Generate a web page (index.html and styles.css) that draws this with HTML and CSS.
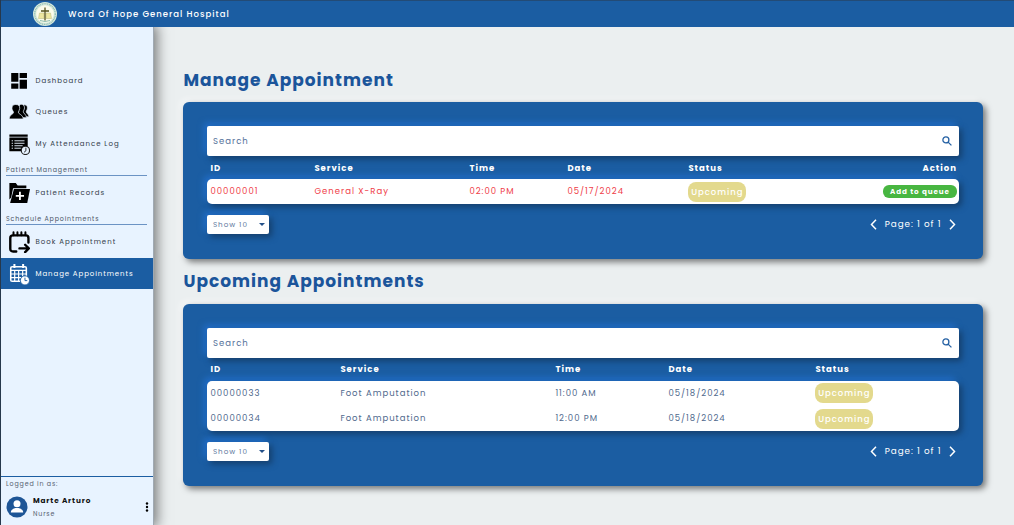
FILE: index.html
```html
<!DOCTYPE html>
<html lang="en">
<head>
<meta charset="utf-8">
<title>Word Of Hope General Hospital</title>
<link rel="stylesheet" href="styles.css">
</head>
<body>
<div class="app">
  <header class="topbar">
    <svg class="logo" viewBox="0 0 24 24"><circle cx="12" cy="12" r="12" fill="#d6e8dc"/><circle cx="12" cy="12" r="10.300" fill="none" stroke="#8ebcb0" stroke-width="1.300" stroke-dasharray="1 .8"/><circle cx="12" cy="12" r="8.800" fill="#fbfbea"/><path d="M6.500 11h4.500v5.500H5.500zM13 11h4.500l1 5.500H13z" fill="#eee6a0" stroke="#b9b77c" stroke-width=".5"/><path d="M12 5.500v13M8 9h8" stroke="#56501d" stroke-width="1.300"/><path d="M7 18.500q5 2 10 0" fill="none" stroke="#8ebcb0"/></svg>
    <span class="brand">Word Of Hope General Hospital</span>
  </header>
  <div class="body">
    <aside class="sidebar">
      <nav class="nav">
        <a class="item"><svg class="icon" viewBox="0 0 24 24"><path d="M3.500 3.300h7.800v9.500H3.500zM12.700 3.300h8v5.500h-8zM3.500 14.700h7.800v5.800H3.500zM12.700 10.500h8v10h-8z"/></svg><span>Dashboard</span></a>
        <a class="item"><svg class="icon" viewBox="0 0 24 24"><g stroke="#e8f3ff" stroke-width=".8"><path d="M17 4.500c1.800-1 4.200.2 4.200 3 0 2-1.300 3-1.300 4.300 0 1.700 2.500 2.200 3.200 5.400H15V7z"/><path d="M13 4.200c2-1.400 5 0 5 3.300 0 2-1.300 3-1.300 4.300 0 1.700 3 2.500 3.600 6.400H11V7z"/><path d="M8.500 3.800c3.200 0 4.300 1.700 4.300 4.200 0 2-1.400 2.900-1.400 4.400 0 2.200 4.600 2 5.300 7.200H1.300c.6-5.200 4.700-5 4.700-7.200 0-1.300-1.700-2.200-1.700-4.400 0-2.500.9-4.200 4.200-4.200z"/></g></svg><span>Queues</span></a>
        <a class="item"><svg class="icon" viewBox="0 0 24 24"><path d="M1.500 1.500h20v2.600h-20zM1.500 5h20v15h-20z"/><path d="M4 8.500h1.500M7 8.500h11M4 11.200h1.500M7 11.200h11M4 13.900h1.500M7 13.900h9M4 16.600h1.500M7 16.600h7" stroke="#e8f3ff" stroke-width="1"/><circle cx="19" cy="19" r="4.500" fill="#e8f3ff" stroke="#222" stroke-width="1.200"/><path d="M19.500 16v3.500L17.500 21" fill="none" stroke="#222"/></svg><span>My Attendance Log</span></a>
        <div class="group">Patient Management</div>
        <a class="item"><svg class="icon" viewBox="0 0 24 24"><path d="M1.500 19V1.200h7l2 2.500h9.500v3H5.500L3.500 17z"/><path d="M6.500 7.700H24l-3 15.300H2.300z"/><path d="M13 10.700v9M8.500 15.200h9" stroke="#fff" stroke-width="2"/></svg><span>Patient Records</span></a>
        <div class="group">Schedule Appointments</div>
        <a class="item"><svg class="icon" viewBox="0 0 24 24"><g fill="none" stroke="#000" stroke-width="2.600" stroke-linecap="round" stroke-linejoin="round"><path d="M9 22.300H5.500Q2.500 22.300 2.500 19.300V7.500Q2.500 4.800 5.500 4.800h14Q22.300 4.800 22.300 7.500V12.500"/><path d="M6 1.500v3M10.300 1.500v3M14.600 1.500v3M19 1.500v3" stroke-width="2.200"/><path d="M12.500 19H22.500M18.700 15l4 4-4 4"/></g></svg><span>Book Appointment</span></a>
        <a class="item active"><svg class="icon" viewBox="0 0 24 24"><rect x="3" y="4" width="17" height="16" rx="1.500" fill="none" stroke="#fff" stroke-width="1.700"/><path d="M3 8h17M7.300 8v12M11.600 8v12M16 8v12M3 12h17M3 16h17" stroke="#fff" stroke-width="1.300"/><path d="M7 1v4.500M16.500 1v4.500" stroke="#fff" stroke-width="2.200"/><circle cx="18.500" cy="19" r="5" fill="#fff" stroke="#1b5da2"/><path d="M18.500 16v3.200H21" fill="none" stroke="#1b5da2"/></svg><span>Manage Appointments</span></a>
      </nav>
      <div class="account">
        <div class="logged">Logged in as:</div>
        <div class="user">
          <svg class="avatar" viewBox="0 0 22 22"><circle cx="11" cy="11" r="10.500" fill="#1d5596"/><circle cx="11" cy="7.700" r="3.500" fill="#fff"/><path d="M4.800 16.500c0-6 12.400-6 12.400 0z" fill="#fff"/></svg>
          <div class="who"><div class="name">Marte Arturo</div><div class="role">Nurse</div></div>
          <svg class="kebab" viewBox="0 0 4 10"><circle cx="2" cy="1.500" r="1.200"/><circle cx="2" cy="5" r="1.200"/><circle cx="2" cy="8.500" r="1.200"/></svg>
        </div>
      </div>
    </aside>
    <main class="main">
      <h1 class="title">Manage Appointment</h1>
      <section class="panel">
        <div class="search"><span>Search</span><svg class="glass" viewBox="0 0 10 10"><circle cx="3.900" cy="3.900" r="3" /><path d="M6.100 6.100L9.400 9.400"/></svg></div>
        <div class="row head cols-a"><span>ID</span><span>Service</span><span>Time</span><span>Date</span><span>Status</span><span class="end">Action</span></div>
        <div class="rows">
          <div class="row red cols-a"><span>00000001</span><span>General X-Ray</span><span>02:00 PM</span><span>05/17/2024</span><span class="state"><b class="badge">Upcoming</b></span><span class="end"><button class="add">Add to queue</button></span></div>
        </div>
        <div class="foot"><div class="select"><span>Show 10</span><i class="caret"></i></div>
          <div class="pager"><svg class="chev" viewBox="0 0 7 11"><path d="M6 .8L1.500 5.500 6 10.200"/></svg><span>Page: 1 of 1</span><svg class="chev" viewBox="0 0 7 11"><path d="M1 .8l4.500 4.700L1 10.200"/></svg></div></div>
      </section>
      <h1 class="title second">Upcoming Appointments</h1>
      <section class="panel">
        <div class="search lower"><span>Search</span><svg class="glass" viewBox="0 0 10 10"><circle cx="3.900" cy="3.900" r="3" /><path d="M6.100 6.100L9.400 9.400"/></svg></div>
        <div class="row head cols-b"><span>ID</span><span>Service</span><span>Time</span><span>Date</span><span>Status</span></div>
        <div class="rows">
          <div class="row cols-b"><span>00000033</span><span>Foot Amputation</span><span>11:00 AM</span><span>05/18/2024</span><span class="state"><b class="badge">Upcoming</b></span></div>
          <div class="row cols-b"><span>00000034</span><span>Foot Amputation</span><span>12:00 PM</span><span>05/18/2024</span><span class="state"><b class="badge">Upcoming</b></span></div>
        </div>
        <div class="foot"><div class="select"><span>Show 10</span><i class="caret"></i></div>
          <div class="pager"><svg class="chev" viewBox="0 0 7 11"><path d="M6 .8L1.500 5.500 6 10.200"/></svg><span>Page: 1 of 1</span><svg class="chev" viewBox="0 0 7 11"><path d="M1 .8l4.500 4.700L1 10.200"/></svg></div></div>
      </section>
    </main>
  </div>
</div>
</body>
</html>
```

FILE: styles.css
```css
* { box-sizing: border-box; }
body { margin: 0; font-family: Poppins, Inter, "Open Sans", sans-serif; background: #ebeff0; }
.app { width: 1014px; height: 525px; overflow: hidden; display: flex; flex-direction: column; border-left: 1px solid #26384c; }
.topbar { height: 27px; flex: none; display: flex; align-items: center; gap: 11px; padding-left: 32px; background: #1b5da2; border-top: 1px solid #234b76; color: #fff; }
.logo { width: 24px; height: 24px; }
.brand { font-size: 8.500px; font-weight: 500; letter-spacing: 1px; white-space: nowrap; }
.body { flex: 1; display: flex; min-height: 0; }
.sidebar { width: 153px; flex: none; display: flex; flex-direction: column; background: #e8f3ff; border-right: 1px solid #9fa9b3; box-shadow: 1px 0 12px 2px rgba(0, 0, 0, .5); clip-path: inset(0 -30px 0 0); }
.nav { flex: 1; padding-top: 38px; }
.item { height: 31.500px; display: flex; align-items: center; gap: 5.500px; padding-left: 7px; font-size: 7px; letter-spacing: 1px; color: #333c49; white-space: nowrap; }
.icon { width: 22px; height: 22px; flex: none; }
.active { background: #1b5da2; color: #fff; letter-spacing: .92px; }
.group { height: 16px; margin: 0 6px 1.700px 5px; padding-top: 4px; font-size: 6.300px; line-height: 11px; letter-spacing: .85px; color: #4c5666; border-bottom: 1px solid #6b93c4; white-space: nowrap; }
.account { height: 49px; border-top: 1px solid #1b5da2; padding: 2px 4px 0 5px; }
.logged { font-size: 6.300px; line-height: 9px; letter-spacing: .85px; color: #566070; }
.user { display: flex; align-items: center; height: 37px; }
.avatar { width: 22px; height: 22px; }
.who { flex: 1; padding-left: 5px; }
.name { font-size: 7.300px; line-height: 13px; font-weight: 700; letter-spacing: .85px; color: #111; }
.role { font-size: 6.300px; line-height: 13px; letter-spacing: .85px; color: #566070; }
.kebab { width: 4px; height: 10px; }
.main { flex: 1; padding: 40.300px 30.600px 0 29.400px; }
.title { margin: 0; height: 34.800px; line-height: 26px; font-size: 17px; font-weight: 700; letter-spacing: 1px; color: #1b559b; white-space: nowrap; }
.second { height: 35.300px; }
.panel { background: #1b5da2; border-radius: 6px; padding: 24px 24px 25px; margin-bottom: 9px; box-shadow: 3px 3px 6px rgba(0, 0, 0, .5), -3px -3px 6px rgba(255, 255, 255, .5); }
.search { height: 30px; display: flex; align-items: center; justify-content: space-between; padding: 0 7px 0 5.600px; background: #fff; border-radius: 2px; box-shadow: 3px 3px 6px #153f6c, -3px -3px 6px #2370cc; font-size: 8.500px; letter-spacing: 1px; color: #537099; }
.lower { padding-top: 1px; }
.glass { width: 10px; height: 10px; fill: none; stroke: #2460a3; stroke-width: 1.300; }
.row { display: grid; align-items: center; height: 25.250px; padding: 0 2.500px 0 3px; font-size: 8.500px; letter-spacing: 1px; color: #50698d; white-space: nowrap; }
.cols-a { grid-template-columns: 104px 155px 98px 121px 1fr auto; }
.cols-b { grid-template-columns: 130px 215px 113px 147px 1fr; }
.head { height: 23.100px; padding-top: 1px; color: #fff; font-weight: 700; }
.red { color: #ef3d48; }
.end { text-align: right; }
.rows { background: #fff; border-radius: 5px; box-shadow: 3px 3px 6px #153f6c, -3px -3px 6px #2370cc; }
.state { display: flex; }
.badge { height: 20px; line-height: 20px; width: 58px; text-align: center; border-radius: 8px; background: #e3d98d; color: #fff; font-weight: 500; }
.add { display: block; width: 74px; height: 13px; padding: 0; border: 0; border-radius: 6px; background: #48b641; color: #fff; font: 700 7.200px/12px Poppins, Inter, sans-serif; letter-spacing: .9px; }
.foot { display: flex; align-items: center; justify-content: space-between; margin-top: 10.900px; height: 19px; padding-right: 3px; }
.select { width: 61.500px; height: 19px; display: flex; align-items: center; justify-content: space-between; padding: 0 4px 0 5.500px; background: #fff; border-radius: 2px; box-shadow: 3px 3px 6px #153f6c, -3px -3px 6px #2370cc; font-size: 7.200px; letter-spacing: 1px; color: #617a9e; }
.caret { border: 3px solid transparent; border-top-color: #234f87; border-bottom: 0; }
.pager { display: flex; align-items: center; gap: 8px; color: #fff; font-size: 8.800px; letter-spacing: .92px; }
.chev { width: 7px; height: 11px; fill: none; stroke: #fff; stroke-width: 1.500; }
```
